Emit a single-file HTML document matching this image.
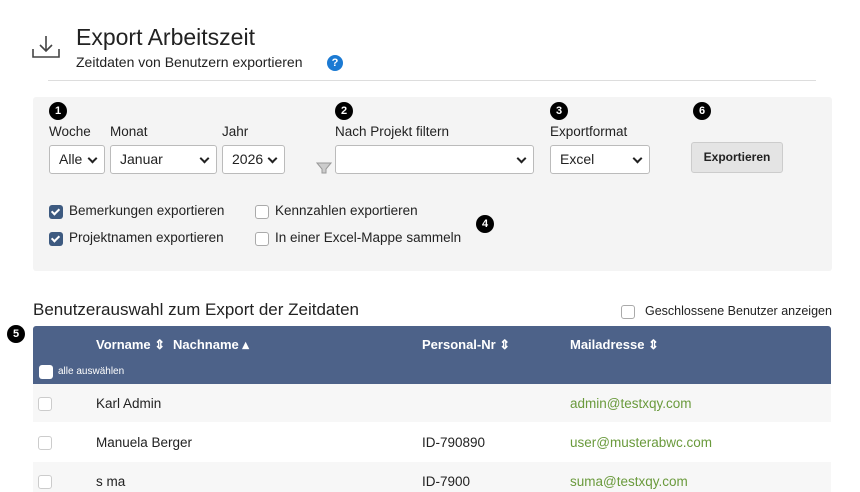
<!DOCTYPE html>
<html><head><style>
*{box-sizing:border-box;margin:0;padding:0}
body{width:860px;height:490px;overflow:hidden;background:#fff;font-family:"Liberation Sans",sans-serif;color:#222;position:relative;font-size:13.5px}
.a{position:absolute;white-space:nowrap}
.num{position:absolute;width:18px;height:18px;border-radius:50%;background:#000;color:#fff;font-size:11px;font-weight:bold;text-align:center;line-height:18px}
.sel{position:absolute;height:29px;border:1px solid #bbb;border-radius:3px;background:#fff;font-size:14px;line-height:27px;padding-left:9px}
.sel:after{content:"";position:absolute;right:8px;top:9px;width:5px;height:5px;border-right:2px solid #222;border-bottom:2px solid #222;transform:rotate(45deg)}
.cb{position:absolute;width:14px;height:14px;border-radius:3px}
.on{background:#3d5a80}
.on:after{content:"";position:absolute;left:4px;top:2px;width:3px;height:6px;border-right:2px solid #fff;border-bottom:2px solid #fff;transform:rotate(45deg)}
.off{background:#fff;border:1px solid #aaa}
.th{position:absolute;color:#fff;font-weight:bold;font-size:13px}
.row{position:absolute;left:33px;width:798px}
.em{color:#6a9a3c}
</style></head><body>
<svg class="a" style="left:31px;top:34px" width="30" height="26" viewBox="0 0 30 26"><path d="M15 2v15M9 11l6 6 6-6M2 15v8h26v-8" fill="none" stroke="#444" stroke-width="1.6"/></svg>
<div class="a" style="left:76px;top:24px;font-size:23px;color:#222">Export Arbeitszeit</div>
<div class="a" style="left:76px;top:54px;font-size:14px">Zeitdaten von Benutzern exportieren</div>
<div class="a" style="left:327px;top:55px;width:16px;height:16px;border-radius:50%;background:#1b7ad3;color:#fff;font-size:11px;font-weight:bold;text-align:center;line-height:16px">?</div>
<div class="a" style="left:48px;top:80px;width:768px;height:1px;background:#ddd"></div>
<div class="a" style="left:33px;top:97px;width:799px;height:174px;background:#f4f4f4;border-radius:3px"></div>
<div class="num" style="left:49px;top:102px">1</div>
<div class="num" style="left:335px;top:102px">2</div>
<div class="num" style="left:550px;top:102px">3</div>
<div class="num" style="left:693px;top:102px">6</div>
<div class="num" style="left:476px;top:215px">4</div>
<div class="num" style="left:7px;top:325px">5</div>
<div class="a" style="left:49px;top:124px">Woche</div>
<div class="a" style="left:110px;top:124px">Monat</div>
<div class="a" style="left:222px;top:124px">Jahr</div>
<div class="a" style="left:335px;top:124px">Nach Projekt filtern</div>
<div class="a" style="left:550px;top:124px">Exportformat</div>
<div class="sel" style="left:49px;top:145px;width:56px">Alle</div>
<div class="sel" style="left:110px;top:145px;width:107px">Januar</div>
<div class="sel" style="left:222px;top:145px;width:63px">2026</div>
<svg class="a" style="left:316px;top:162px" width="16" height="12"><path d="M1 1h14l-5 6v4h-4v-4z" fill="#ccc" stroke="#999"/></svg>
<div class="sel" style="left:335px;top:145px;width:199px"></div>
<div class="sel" style="left:550px;top:145px;width:100px">Excel</div>
<div class="a" style="left:691px;top:142px;width:92px;height:31px;background:#e4e4e4;border:1px solid #ccc;border-radius:3px;font-size:12px;font-weight:bold;text-align:center;line-height:29px">Exportieren</div>
<div class="cb on" style="left:49px;top:205px"></div><div class="a" style="left:69px;top:203px">Bemerkungen exportieren</div>
<div class="cb on" style="left:49px;top:232px"></div><div class="a" style="left:69px;top:230px">Projektnamen exportieren</div>
<div class="cb off" style="left:255px;top:205px"></div><div class="a" style="left:275px;top:203px">Kennzahlen exportieren</div>
<div class="cb off" style="left:255px;top:232px"></div><div class="a" style="left:275px;top:230px">In einer Excel-Mappe sammeln</div>
<div class="a" style="left:33px;top:300px;font-size:17px">Benutzerauswahl zum Export der Zeitdaten</div>
<div class="cb off" style="left:621px;top:305px"></div><div class="a" style="left:645px;top:304px;font-size:12.5px">Geschlossene Benutzer anzeigen</div>
<div class="a" style="left:33px;top:326px;width:798px;height:58px;background:#4d6289;border-radius:3px 3px 0 0"></div>
<div class="th" style="left:96px;top:337px">Vorname ⇕</div>
<div class="th" style="left:173px;top:337px">Nachname ▴</div>
<div class="th" style="left:422px;top:337px">Personal-Nr ⇕</div>
<div class="th" style="left:570px;top:337px">Mailadresse ⇕</div>
<div class="cb" style="left:39px;top:365px;background:#fff"></div>
<div class="a" style="left:58px;top:366px;color:#fff;font-size:10px">alle auswählen</div>
<div class="row" style="top:384px;height:38px;background:#f7f7f7"></div>
<div class="row" style="top:462px;height:30px;background:#f7f7f7"></div>
<div class="cb off" style="left:38px;top:397px;border-color:#ccc"></div>
<div class="cb off" style="left:38px;top:436px;border-color:#ccc"></div>
<div class="cb off" style="left:38px;top:475px;border-color:#ccc"></div>
<div class="a" style="left:96px;top:396px">Karl Admin</div>
<div class="a em" style="left:570px;top:396px">admin@testxqy.com</div>
<div class="a" style="left:96px;top:435px">Manuela Berger</div>
<div class="a" style="left:422px;top:435px">ID-790890</div>
<div class="a em" style="left:570px;top:435px">user@musterabwc.com</div>
<div class="a" style="left:96px;top:474px">s ma</div>
<div class="a" style="left:422px;top:474px">ID-7900</div>
<div class="a em" style="left:570px;top:474px">suma@testxqy.com</div>
</body></html>
